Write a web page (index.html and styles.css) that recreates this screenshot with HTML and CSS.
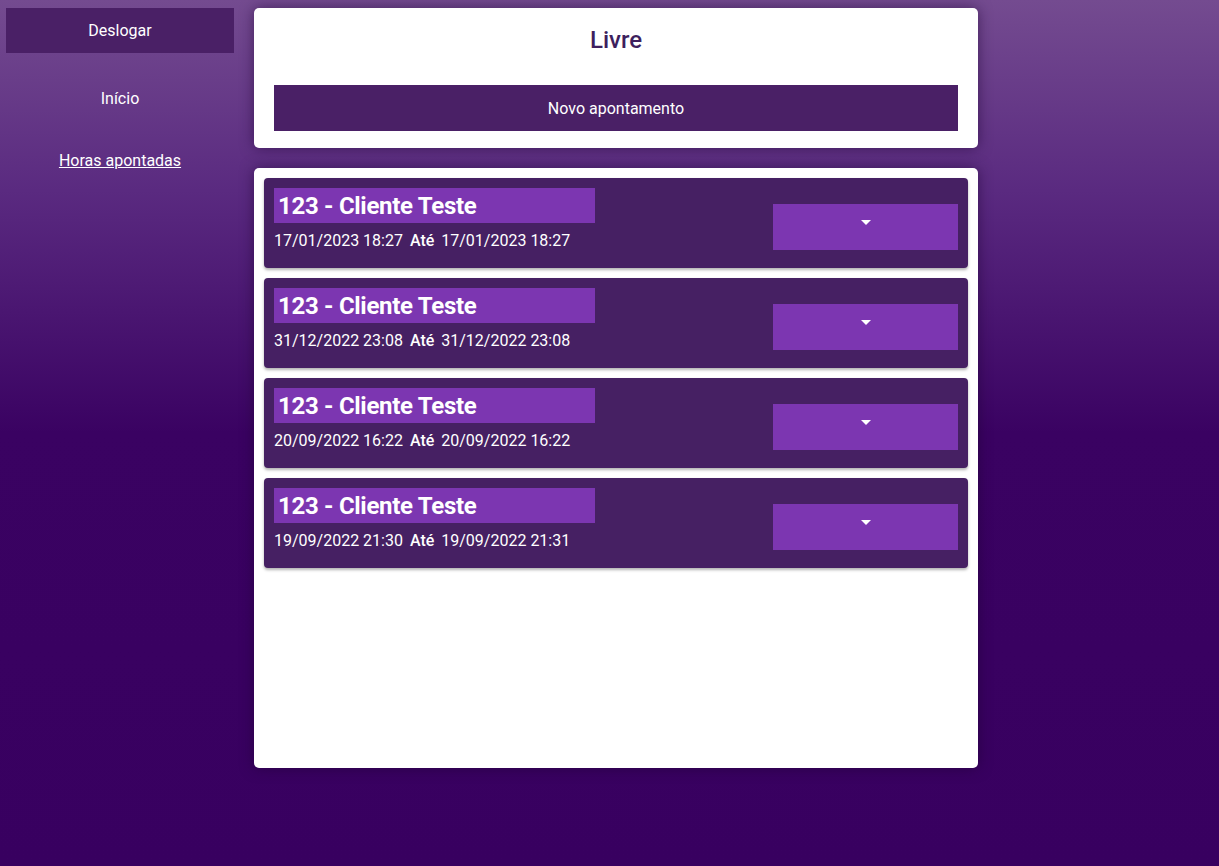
FILE: index.html
```html
<!DOCTYPE html>
<html lang="pt-BR">
<head>
<meta charset="utf-8">
<title>Horas apontadas</title>
<link rel="stylesheet" href="styles.css">
</head>
<body>
<div class="layout">
  <nav class="sidebar">
    <button class="logout">Deslogar</button>
    <a class="nav-link" href="#">Início</a>
    <a class="nav-link underline" href="#">Horas apontadas</a>
  </nav>
  <main class="main">
    <section class="panel top-panel">
      <h1 class="title">Livre</h1>
      <button class="primary">Novo apontamento</button>
    </section>
    <section class="panel list-panel">
      <div class="entry">
        <div class="entry-info">
          <div class="entry-title">123 - Cliente Teste</div>
          <div class="entry-dates">17/01/2023 18:27 <span class="ate">Até</span> 17/01/2023 18:27</div>
        </div>
        <button class="dropdown"><span class="caret"></span></button>
      </div>
      <div class="entry">
        <div class="entry-info">
          <div class="entry-title">123 - Cliente Teste</div>
          <div class="entry-dates">31/12/2022 23:08 <span class="ate">Até</span> 31/12/2022 23:08</div>
        </div>
        <button class="dropdown"><span class="caret"></span></button>
      </div>
      <div class="entry">
        <div class="entry-info">
          <div class="entry-title">123 - Cliente Teste</div>
          <div class="entry-dates">20/09/2022 16:22 <span class="ate">Até</span> 20/09/2022 16:22</div>
        </div>
        <button class="dropdown"><span class="caret"></span></button>
      </div>
      <div class="entry">
        <div class="entry-info">
          <div class="entry-title">123 - Cliente Teste</div>
          <div class="entry-dates">19/09/2022 21:30 <span class="ate">Até</span> 19/09/2022 21:31</div>
        </div>
        <button class="dropdown"><span class="caret"></span></button>
      </div>
    </section>
  </main>
</div>
</body>
</html>
```
FILE: styles.css
```css
* { box-sizing: border-box; }
html, body { height: 100%; }
body {
  margin: 0;
  font-family: "Roboto", "Liberation Sans", sans-serif;
  color: #fff;
  background: linear-gradient(to bottom, #744b90 0%, #5a2a80 22%, #3a0262 50%, #380060 100%);
  background-attachment: fixed;
  min-height: 866px;
}
.layout {
  display: flex;
  align-items: flex-start;
  padding-top: 8px;
}
.sidebar {
  width: 240px;
  padding: 0 6px;
  display: flex;
  flex-direction: column;
  align-items: center;
}
.logout {
  width: 100%;
  height: 45px;
  border: none;
  background: #4a2066;
  color: #fff;
  font-family: inherit;
  font-size: 16px;
  cursor: pointer;
}
.nav-link {
  color: #fff;
  font-size: 16px;
  text-decoration: none;
  line-height: 18px;
}
.sidebar .nav-link:nth-of-type(1) { margin-top: 37px; }
.sidebar .nav-link.underline { margin-top: 44px; text-decoration: underline; }
.main {
  margin-left: 14px;
  width: 724px;
  display: flex;
  flex-direction: column;
  gap: 20px;
}
.panel {
  background: #fff;
  border-radius: 5px;
  box-shadow: 0 0 14px rgba(30, 0, 50, 0.55);
}
.top-panel {
  padding: 17px 20px 17px;
  display: flex;
  flex-direction: column;
  align-items: center;
}
.title {
  margin: 0;
  font-size: 24px;
  font-weight: 500;
  color: #3e1f5e;
  line-height: 30px;
}
.primary {
  margin-top: 30px;
  width: 100%;
  height: 46px;
  border: none;
  background: #4a2066;
  color: #fff;
  font-family: inherit;
  font-size: 16px;
  cursor: pointer;
}
.list-panel {
  height: 600px;
  padding: 10px;
  display: flex;
  flex-direction: column;
  gap: 10px;
}
.entry {
  height: 90px;
  background: #462063;
  border-radius: 4px;
  box-shadow: 0 2px 3px rgba(0, 0, 0, 0.3);
  padding: 10px;
  display: flex;
  align-items: center;
  justify-content: space-between;
}
.entry-info {
  align-self: flex-start;
  display: flex;
  flex-direction: column;
}
.entry-title {
  width: 321px;
  height: 35px;
  background: #7c36b1;
  font-size: 24px;
  font-weight: 700;
  line-height: 36px;
  padding-left: 4px;
  letter-spacing: -0.3px;
}
.entry-dates {
  margin-top: 8px;
  font-size: 16px;
  line-height: 20px;
}
.ate { margin: 0 3px; font-weight: 500; }
.dropdown {
  width: 185px;
  height: 46px;
  margin-top: 8px;
  border: none;
  background: #7c36b1;
  display: flex;
  align-items: center;
  justify-content: center;
  padding: 0 0 10px;
  cursor: pointer;
}
.caret {
  width: 0;
  height: 0;
  border-left: 5px solid transparent;
  border-right: 5px solid transparent;
  border-top: 5px solid #fff;
}
```
